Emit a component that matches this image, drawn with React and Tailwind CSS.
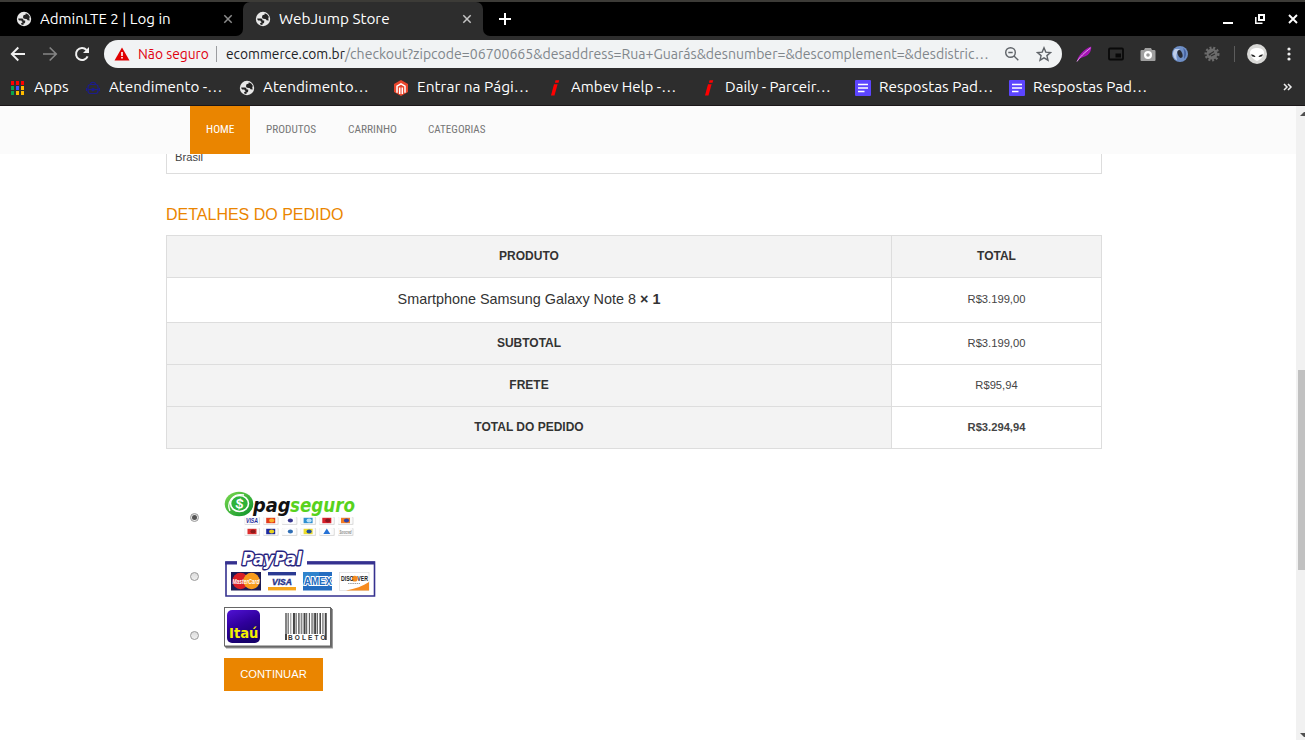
import React, { useLayoutEffect, useRef, useState } from "react";

// Text squeezed or stretched horizontally so that it fills a given width.
function Fit({ w, className = "", children }) {
  const ref = useRef(null);
  const [scale, setScale] = useState(1);
  useLayoutEffect(() => {
    const measure = () => {
      if (ref.current && ref.current.offsetWidth) setScale(w / ref.current.offsetWidth);
    };
    measure();
    document.fonts?.ready.then(measure);
  }, [w]);
  return (
    <span className={"block shrink-0 whitespace-nowrap " + className} style={{ width: w }}>
      <span ref={ref} className="inline-block origin-left" style={{ transform: `scaleX(${scale})` }}>
        {children}
      </span>
    </span>
  );
}

const Globe = () => (
  <svg viewBox="0 0 16 16" className="size-4 shrink-0">
    <circle cx="8" cy="8" r="7.200" fill="#e8e8e8" />
    <path d="M2.200 7.600h3.600q1.400 0 1.700 1.300l.2.700h1.500v1.700q-.2 1.200-1.700 1.300v1.300q-1.300.1-2.400-.6l.1-1.300q1.200-.1 1.500-1.100-1.100-.1-1.300-1.400H3.200q-.8-.5-1-1.900z" fill="#222" />
    <path d="M7.500 4.300l2.200-.9V2.200q3 .6 4.100 3.600l-.5 1.700.4 1.900-2.200-.1q-.3-1.200-1.500-1.300l-1.700-.2q-1.300-.4-1.300-1.900z" fill="#222" />
  </svg>
);

const CloseX = ({ className = "" }) => (
  <svg viewBox="0 0 10 10" className={"size-[10px] shrink-0 " + className}>
    <path d="M1.300 1.300l7.400 7.400M8.700 1.300L1.300 8.700" stroke="currentColor" strokeWidth="1.500" />
  </svg>
);

const AppsIcon = () => (
  <svg viewBox="0 0 14 14" className="mx-px size-[14px] shrink-0" shapeRendering="crispEdges">
    {["#f00", "#f00", "#f00", "#0aa54c", "#3f51ff", "#fb0", "#0aa54c", "#fb0", "#fb0"].map((c, i) => (
      <rect key={i} x={(i % 3) * 5} y={Math.floor(i / 3) * 5} width="3" height="4" fill={c} />
    ))}
  </svg>
);

const Robot = () => (
  <svg viewBox="0 0 16 16" className="size-4 shrink-0" fill="none" stroke="#1c1c8c" strokeWidth="1.200">
    <path d="M5.500 4.500C5.500 1.500 10.500 1.500 10.500 4.500" />
    <rect x="3" y="4.500" width="10" height="9" rx="2.500" />
    <path d="M1.600 8v3M14.400 8v3M3 9.500h10" />
    <circle cx="8" cy="9.500" r="1.200" />
  </svg>
);

const Magento = () => (
  <svg viewBox="0 0 16 16" className="size-4 shrink-0">
    <path d="M8 0l7 4v8l-7 4-7-4V4z" fill="#e8452c" />
    <path d="M4 12.800V6.200L8 3.800l4 2.400v6.600M6.700 14V7.500M9.300 14V7.500" fill="none" stroke="#fff" strokeWidth="1.500" />
  </svg>
);

const RedI = () => (
  <svg viewBox="0 0 16 16" className="size-4 shrink-0">
    <path d="M8.500 .3h3.700l-.7 2.500H8z" fill="#f00" />
    <path d="M7 4.300h3.600L7.500 15.400H4z" fill="#f00" />
  </svg>
);

const FormIcon = () => (
  <svg viewBox="0 0 16 16" className="size-4 shrink-0">
    <rect width="16" height="16" rx="1" fill="#5c45ff" />
    <path d="M3 4.500h10M3 8h10M3 11.500h6.500" stroke="#fff" strokeWidth="1.600" />
  </svg>
);

const bookmarks = [
  [AppsIcon, "Apps", 35, "w-[75px]"],
  [Robot, "Atendimento -…", 113, "w-[154px]"],
  [Globe, "Atendimento…", 106, "w-[154px]"],
  [Magento, "Entrar na Pági…", 112, "w-[154px]"],
  [RedI, "Ambev Help -…", 105, "w-[154px]"],
  [RedI, "Daily - Parceir…", 106, "w-[154px]"],
  [FormIcon, "Respostas Pad…", 114, "w-[154px]"],
  [FormIcon, "Respostas Pad…", 114, "w-[154px]"],
];

function TabStrip() {
  return (
    <div className="flex h-[36px] border-t-2 border-[#3c3b37] bg-black text-[14.5px] text-white">
      <div className="flex w-[243px] bg-[#2d2d2d]">
        <div className="flex w-full items-center rounded-br-[7px] bg-black pl-4">
          <Globe />
          <Fit w={131} className="ml-2">AdminLTE 2 | Log in</Fit>
          <CloseX className="ml-[52px] text-[#8c8c8c]" />
        </div>
      </div>
      <div className="flex w-[240px] items-center rounded-t-[7px] bg-[#2d2d2d] pl-3">
        <Globe />
        <Fit w={111} className="ml-2">WebJump Store</Fit>
        <CloseX className="ml-[72px] text-[#c4c4c4]" />
      </div>
      <div className="flex flex-1 bg-[#2d2d2d]">
        <div className="flex w-full items-center rounded-bl-[7px] bg-black pl-4">
          <svg viewBox="0 0 12 12" className="size-3">
            <path d="M6 0v12M0 6h12" stroke="#fff" strokeWidth="2" />
          </svg>
          <div className="ml-auto flex items-center pr-[7px]">
            <svg viewBox="0 0 10 10" className="size-[10px]"><path d="M0 9h10" stroke="#fff" strokeWidth="2" /></svg>
            <svg viewBox="0 0 10 10" className="ml-[22px] size-[10px]" fill="none" stroke="#fff">
              <rect x="4" y="1" width="5" height="5" strokeWidth="2" />
              <path d="M.8 3v6.200H7.500" strokeWidth="1.500" />
            </svg>
            <svg viewBox="0 0 10 10" className="ml-[23px] size-[10px]">
              <path d="M1 1l8 8M9 1L1 9" stroke="#fff" strokeWidth="1.900" />
            </svg>
          </div>
        </div>
      </div>
    </div>
  );
}

function Toolbar() {
  return (
    <div className="flex h-9 items-center pl-[10px] text-[14px]">
      <svg viewBox="0 0 16 16" className="size-4" fill="none" stroke="#f0f0f0" strokeWidth="1.900">
        <path d="M15 8H2M8.300 1.500L1.800 8l6.500 6.500" />
      </svg>
      <svg viewBox="0 0 16 16" className="ml-4 size-4" fill="none" stroke="#858585" strokeWidth="1.700">
        <path d="M1 8h13M7.700 1.500L14.200 8l-6.500 6.500" />
      </svg>
      <svg viewBox="0 0 16 16" className="ml-4 size-4">
        <path d="M13.600 10.300A6 6 0 1 1 12.500 4" fill="none" stroke="#f0f0f0" strokeWidth="2" />
        <path d="M15 1v6H9z" fill="#f0f0f0" />
      </svg>
      <div className="ml-[14px] flex h-7 w-[958px] items-center rounded-full bg-[#f1f3f4] pl-[10px]">
        <svg viewBox="0 0 16 14" className="h-[14px] w-4">
          <path d="M8 .5L15.500 13.500H.5z" fill="#e00000" />
          <path d="M8 5v4M8 10v1.600" stroke="#fff" strokeWidth="1.600" />
        </svg>
        <Fit w={71} className="ml-2 text-[#e0000f]">Não seguro</Fit>
        <span className="mr-[9px] ml-[7px] h-4 w-px bg-[#9b9da0]" />
        <Fit w={119} className="text-[#202124]">ecommerce.com.br</Fit>
        <Fit w={644} className="text-[#80868b]">
          /checkout?zipcode=06700665&amp;desaddress=Rua+Guarás&amp;desnumber=&amp;descomplement=&amp;desdistric…
        </Fit>
        <svg viewBox="0 0 16 16" className="ml-[15px] size-4" fill="none" stroke="#5f6368" strokeWidth="1.400">
          <circle cx="6.500" cy="6.500" r="4.800" />
          <path d="M10 10l4.300 4.300M4.300 6.500h4.400" />
        </svg>
        <svg viewBox="0 0 16 16" className="ml-4 size-4" fill="none" stroke="#5f6368" strokeWidth="1.400">
          <path d="M8 1.800l1.800 4.300 4.700.4-3.600 3.100 1.100 4.600L8 11.800l-4 2.400 1.100-4.600L1.500 6.500l4.700-.4z" />
        </svg>
      </div>
      <svg viewBox="0 0 16 16" className="ml-[14px] size-4">
        <path d="M.8 15.500C2 9.500 8 3 15.200.5c.3 3.500-1 6.500-3.500 8.500-3 2-6 2.300-7.700 3.500z" fill="#a514b5" />
        <path d="M1 15.500C4 11 8 7 14.500 2" stroke="#e5a8ec" fill="none" />
      </svg>
      <svg viewBox="0 0 16 16" className="ml-4 size-4">
        <rect x="1" y="2.500" width="14" height="11" rx="1" fill="none" stroke="#090909" strokeWidth="1.800" />
        <rect x="7.500" y="7.500" width="5.500" height="4" fill="#080808" />
      </svg>
      <svg viewBox="0 0 16 16" className="ml-4 size-4">
        <path d="M5 2h6l1 2h2.300q1.200 0 1.200 1.200v8.800q0 1-1 1H1.500q-1 0-1-1V5.200Q.5 4 1.700 4H4z" fill="#a0a0a0" />
        <circle cx="8" cy="9" r="4" fill="#fff" />
        <circle cx="8" cy="9" r="1.800" fill="#999" />
      </svg>
      <svg viewBox="0 0 16 16" className="ml-4 size-4">
        <circle cx="8" cy="8" r="8" fill="#6f8fc6" />
        <path d="M3 3a7 7 0 0 0 2 11.200C4 10 4 6 8 3z" fill="#bdcdea" />
        <path d="M11 2c4 2 4 8 1 11-.2-3 1-7-1-11z" fill="#4764a4" />
        <ellipse cx="8" cy="8" rx="2.300" ry="4" transform="rotate(-20 8 8)" fill="#272b35" />
      </svg>
      <svg viewBox="0 0 16 16" className="ml-4 size-4">
        <circle cx="8" cy="8" r="5.500" fill="#6c6c6c" />
        <circle cx="8" cy="8" r="6.300" fill="none" stroke="#6c6c6c" strokeWidth="2.400" strokeDasharray="2 1.770" />
        <path d="M6 8l4-2.500M7 10l4-2" stroke="#303030" strokeWidth="1.200" />
        <circle cx="5.600" cy="8.600" r="1" fill="#303030" />
      </svg>
      <span className="ml-[14px] h-4 w-px bg-[#5c5c5c]" />
      <svg viewBox="0 0 20 20" className="ml-3 size-5">
        <circle cx="10" cy="10" r="10" fill="#d8d8d6" />
        <path d="M3 8C4 2.500 16 2.500 17 8c0 4-4 8-7 9C7 16 3 12 3 8z" fill="#fff" />
        <path d="M4 10.500c2-.4 4 .6 4.500 2.500-2.200.2-4-.7-4.500-2.500zM16 10.500c-2-.4-4 .6-4.500 2.500 2.200.2 4-.7 4.500-2.500z" fill="#222" />
      </svg>
      <svg viewBox="0 0 4 14" className="ml-5 h-[14px] w-1" fill="#eee">
        <circle cx="2" cy="2" r="1.600" /><circle cx="2" cy="7" r="1.600" /><circle cx="2" cy="12" r="1.600" />
      </svg>
    </div>
  );
}

function Chrome() {
  return (
    <header className="h-[106px] border-b border-[#1b1719] bg-[#2d2d2d] font-['Ubuntu','Noto_Sans',sans-serif]">
      <TabStrip />
      <Toolbar />
      <div className="flex h-[31px] items-center pl-[10px] text-[14.5px] text-white">
        {bookmarks.map(([Icon, label, w, width], i) => (
          <div key={i} className={"flex shrink-0 items-center gap-2 " + width}>
            <Icon />
            <Fit w={w} className="-mt-[2px]">{label}</Fit>
          </div>
        ))}
        <svg viewBox="0 0 10 8" className="-mt-px ml-[120px] h-2 w-[10px] shrink-0" fill="none" stroke="#eee" strokeWidth="1.500">
          <path d="M1 1l3 3-3 3M5 1l3 3-3 3" />
        </svg>
      </div>
    </header>
  );
}

function NavBar() {
  return (
    <nav className="flex h-12 shrink-0 items-stretch bg-[#fbfbfb] pl-[190px] font-['Roboto_Condensed','Roboto',sans-serif] text-[11.5px] leading-[47px] text-[#777]">
      <div className="w-[60px] bg-[#ea8500] pl-4 text-white"><Fit w={28}>HOME</Fit></div>
      <div className="pl-4"><Fit w={50}>PRODUTOS</Fit></div>
      <div className="pl-[31.500px]"><Fit w={48.5}>CARRINHO</Fit></div>
      <div className="pl-[31.500px]"><Fit w={58}>CATEGORIAS</Fit></div>
    </nav>
  );
}

function OrderTable() {
  const th = "flex items-center justify-center border-r border-b border-[#ddd] bg-[#f3f3f3] pb-[2px] text-[12px] font-bold text-[#333]";
  const td = "flex items-center justify-center border-r border-b border-[#ddd] text-[11.200px] text-[#444]";
  return (
    <div className="grid w-[936px] grid-cols-[725px_210px] grid-rows-[42px_45px_42px_42px_42px] border-t border-l border-[#ddd]">
      <div className={th}>PRODUTO</div>
      <div className={th}>TOTAL</div>
      <div className="flex items-center justify-center border-r border-b border-[#ddd] text-[14.400px] text-[#333]">
        <span>Smartphone Samsung Galaxy Note 8 <strong>× 1</strong></span>
      </div>
      <div className={td + " pb-[2px]"}>R$3.199,00</div>
      <div className={th}>SUBTOTAL</div>
      <div className={td}>R$3.199,00</div>
      <div className={th}>FRETE</div>
      <div className={td}>R$95,94</div>
      <div className={th}>TOTAL DO PEDIDO</div>
      <div className={td + " font-bold text-[#333]"}>R$3.294,94</div>
    </div>
  );
}

function PagSeguro() {
  const minis = [
    ["#fff", "#1d2a9c"], ["#e33b1c", "#f8b02c"], ["#fff", "#35358e"], ["#2e8fd0", "#b9e0f7"], ["#d81f2a", "#8d1520"], ["#f37b22", "#3442a5"],
    ["#dd2e2e", "#8e1b1b"], ["#1d2aa0", "#e8d21c"], ["#fff", "#2f6eb5"], ["#ecdc28", "#1d4ea0"], ["#fff", "#2672d6"], ["#fff", "#888"],
  ];
  return (
    <svg viewBox="0 0 132 48" className="h-12 w-[132px] overflow-visible">
      <defs>
        <linearGradient id="green" x1="0" y1="0" x2="1" y2="1">
          <stop offset="0" stopColor="#7ddb50" /><stop offset="1" stopColor="#079029" />
        </linearGradient>
      </defs>
      <ellipse cx="15" cy="14" rx="14.300" ry="12.200" fill="url(#green)" />
      <path d="M6 21C2 12 9 3 20 5" fill="none" stroke="#fff" strokeWidth="1.300" />
      <ellipse cx="15.500" cy="13.500" rx="9" ry="8" fill="#2fb33a" stroke="#fff" strokeWidth="1.600" />
      <text x="11.500" y="18.500" fontSize="14" fontWeight="bold" fontFamily="Liberation Sans" fill="#fff" transform="rotate(8 15 14)">$</text>
      <g fontFamily="DejaVu Sans, sans-serif" fontSize="19.500" fontWeight="bold" fontStyle="italic">
        <text x="29" y="21.500" textLength="37.500" lengthAdjust="spacingAndGlyphs" fill="#111">pag</text>
        <text x="66" y="21.500" textLength="65" lengthAdjust="spacingAndGlyphs" fill="#58d21d">seguro</text>
      </g>
      {minis.map(([a, b], i) => {
        const x = 20.500 + (i % 6) * 18.700;
        const y = i < 6 ? 27 : 38;
        return (
          <g key={i}>
            <rect x={x} y={y} width="15.500" height="8" rx="1" fill="#ddd" />
            <rect x={x} y={y} width="14.500" height="7" rx="1" fill="#fafafa" />
            <rect x={x + 3} y={y + 0.800} width="9" height="5.400" fill={a} />
            {i === 0 || i === 11 ? (
              <text x={x + 1.500} y={y + 6} fontSize={i ? 4.5 : 6.5} fontWeight="bold" fontStyle="italic" fontFamily="Liberation Sans" textLength="12" lengthAdjust="spacingAndGlyphs" fill={b}>{i ? "Sorocred" : "VISA"}</text>
            ) : i === 10 ? (
              <path d={`M${x + 7.500} ${y + 0.500}l3.500 5.500h-7z`} fill={b} />
            ) : (
              <ellipse cx={x + 8.500} cy={y + 3.500} rx="2.600" ry="2" fill={b} />
            )}
          </g>
        );
      })}
    </svg>
  );
}

function PayPal() {
  return (
    <svg viewBox="0 0 152 50" className="h-[50px] w-[152px] overflow-visible" fontFamily="Liberation Sans" fontWeight="bold">
      <path d="M13 14H2v34h148.500V14H83" fill="none" stroke="#35318f" strokeWidth="1.600" />
      <path d="M1.200 15H13M83 15h68" stroke="#35318f" strokeWidth="3.200" />
      <text x="18" y="17" fontSize="17" fontStyle="italic" textLength="60" lengthAdjust="spacingAndGlyphs" fill="#fff" stroke="#29257f" strokeWidth="2.800" paintOrder="stroke" strokeLinejoin="round" fontFamily="DejaVu Sans, sans-serif">PayPal</text>
      <rect x="7" y="24" width="30" height="18.500" fill="#1c1b54" />
      <circle cx="16.500" cy="33" r="8.200" fill="#d91f26" />
      <circle cx="27.500" cy="33" r="8.200" fill="#f79b1c" />
      <text x="8.500" y="35.500" fontSize="7" textLength="27" lengthAdjust="spacingAndGlyphs" fill="#fff" fontStyle="italic">MasterCard</text>
      <rect x="44" y="24" width="28" height="18.500" fill="#fff" />
      <path d="M44 25.700h28" stroke="#2a3a92" strokeWidth="3.400" />
      <path d="M44 40.700h28" stroke="#f6a51c" strokeWidth="3.400" />
      <text x="48" y="36.500" fontSize="9.500" fontStyle="italic" textLength="20" lengthAdjust="spacingAndGlyphs" fill="#27348b" stroke="#27348b" strokeWidth=".4">VISA</text>
      <rect x="79" y="24" width="29" height="18.500" fill="#246dc0" />
      <path d="M79 24h16v9H79z" fill="#3a9bd8" opacity=".5" />
      <text x="80" y="37" fontSize="10" textLength="28" lengthAdjust="spacingAndGlyphs" fill="#246dc0" stroke="#fff" strokeWidth="2" paintOrder="stroke">AMEX</text>
      <rect x="115.500" y="24.500" width="29.500" height="18" fill="#fff" stroke="#ddd" strokeWidth=".7" />
      <path d="M145 34v8.500h-23c9-1.500 17-4.500 23-8.500z" fill="#f68b1f" />
      <circle cx="130.700" cy="30.700" r="2.900" fill="#f68b1f" />
      <text x="117" y="33" fontSize="6.500" textLength="27" lengthAdjust="spacingAndGlyphs" fill="#222">DISC<tspan fill="#f68b1f">O</tspan>VER</text>
      <path d="M124 35.500h12" stroke="#888" strokeWidth=".8" strokeDasharray="1.500 .7" />
    </svg>
  );
}

function Itau() {
  const bars = [2, 1, 1, 2, 1, 1, 1.500, 2, 1, 1, 2, 2, 1, 1.500, 1, 2];
  return (
    <svg viewBox="0 0 110 44" className="h-11 w-[110px] overflow-visible">
      <defs>
        <linearGradient id="purple" x1="0" y1="0" x2=".4" y2="1">
          <stop offset="0" stopColor="#5012d4" /><stop offset=".5" stopColor="#30009d" /><stop offset="1" stopColor="#16006c" />
        </linearGradient>
      </defs>
      <rect x="2" y="3" width="107" height="39.500" fill="#9a9a9a" />
      <rect x="1" y="2" width="107" height="39.500" fill="#6a6a6a" />
      <rect x=".5" y="1.500" width="106" height="38.500" fill="#fff" stroke="#666" />
      <rect x="3" y="4" width="33" height="33" rx="5" fill="url(#purple)" />
      <text x="5" y="32" fontSize="14.500" fontWeight="bold" fontFamily="DejaVu Sans, sans-serif" textLength="29.500" lengthAdjust="spacingAndGlyphs" fill="#f5f000">Itaú</text>
      {bars.map((w, i) => (
        <rect key={i} x={61 + i * 2.650} y="7" width={w} height={i === 0 || i === 15 ? 27 : 21} fill={i % 4 === 2 ? "#888" : "#444"} />
      ))}
      <path d="M62 7v21M75.600 7v21M88 7v21M99 7v21" stroke="#999" strokeWidth="1.500" />
      <text x="64" y="34" fontSize="6.500" fontFamily="Liberation Sans" fontWeight="bold" textLength="37.500" fill="#333">BOLETO</text>
    </svg>
  );
}

function Radio({ checked }) {
  return (
    <span className="flex size-[9px] shrink-0 items-center justify-center rounded-full border border-[#999] bg-linear-to-b from-[#dcdcdc] to-[#f0f0f0]">
      {checked && <span className="size-[5px] rounded-full bg-[#555]" />}
    </span>
  );
}

function Payments() {
  return (
    <div className="flex flex-col pt-[41px] pl-6">
      <div className="flex h-[58px] items-start">
        <div className="mt-[23px] mr-[25px]"><Radio checked /></div>
        <PagSeguro />
      </div>
      <div className="flex h-[58px] items-start">
        <div className="mt-6 mr-[25px]"><Radio /></div>
        <PayPal />
      </div>
      <div className="flex h-[52px] items-start">
        <div className="mt-[25px] mr-[25px]"><Radio /></div>
        <Itau />
      </div>
      <button className="ml-[34px] h-[33px] w-[99px] bg-[#ea8500] text-[11.200px] text-white">CONTINUAR</button>
    </div>
  );
}

export default function App() {
  return (
    <div className="flex h-[740px] w-[1305px] flex-col overflow-hidden bg-white font-['Liberation_Sans',Arial,sans-serif]">
      <Chrome />
      <div className="flex min-h-0 flex-1">
        <div className="flex w-[1296px] flex-col">
          <NavBar />
          <main className="flex flex-col pl-[166px]">
            <div className="h-5 w-[936px] overflow-hidden border-x border-b border-[#ddd] pl-2 text-[11.200px] text-[#444]">
              <div className="-mt-[5px] leading-4">Brasil</div>
            </div>
            <h2 className="mt-[29px] mb-2 h-6 text-[16px] leading-6 text-[#ea8500]">DETALHES DO PEDIDO</h2>
            <OrderTable />
            <Payments />
          </main>
        </div>
        <div className="flex flex-1 flex-col items-end bg-[#f1f1f1]">
          <svg viewBox="0 0 5 4" className="mt-[6px] h-1 w-[5px]"><path d="M0 4L4 0h1v4z" fill="#505050" /></svg>
          <div className="mt-[254px] h-[200px] w-[7px] bg-[#c1c1c1]" />
          <svg viewBox="0 0 5 4" className="mt-auto mb-[3px] h-1 w-[5px]"><path d="M0 0h5v4H4z" fill="#505050" /></svg>
        </div>
      </div>
    </div>
  );
}
